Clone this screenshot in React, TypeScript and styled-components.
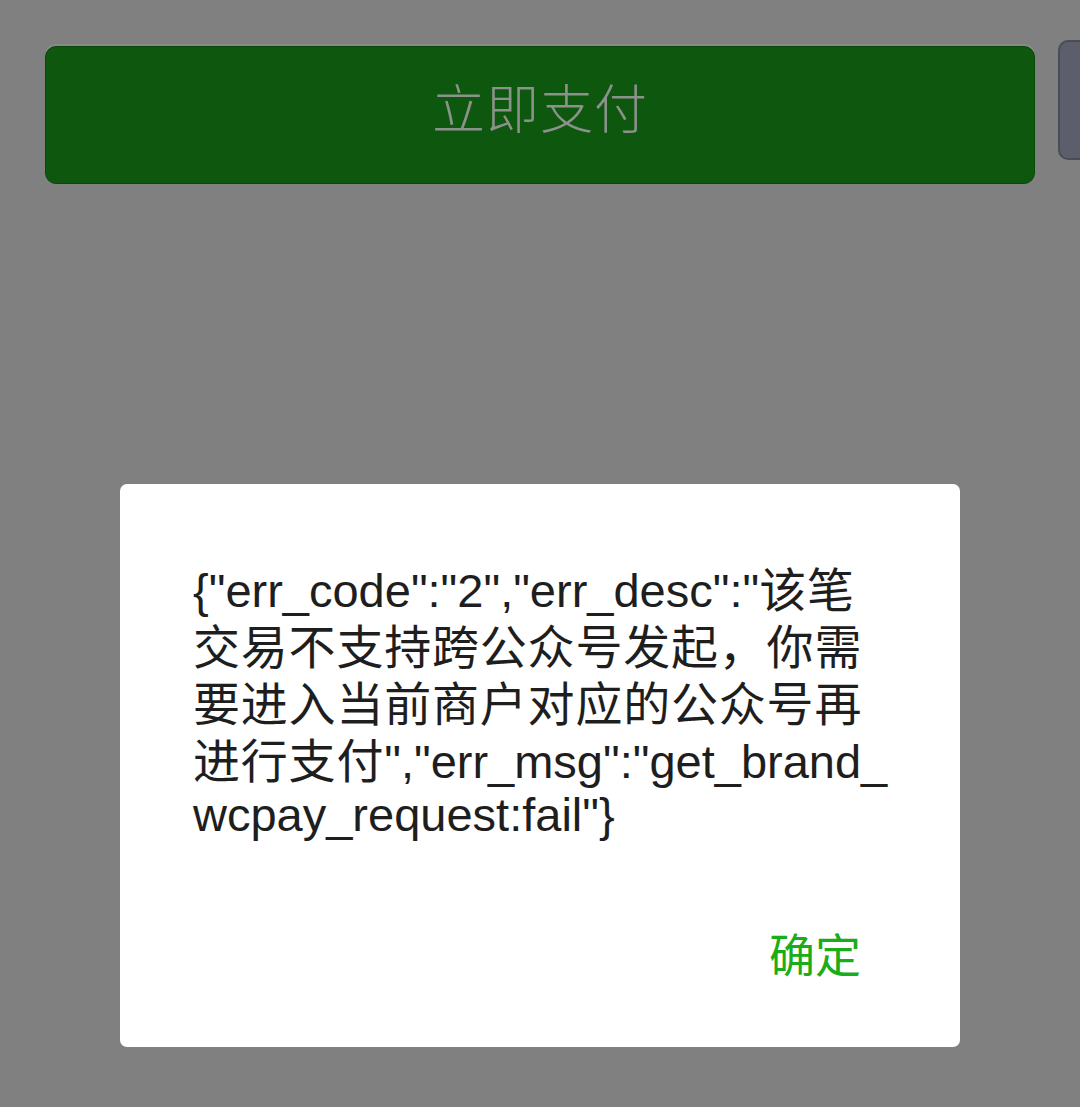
import React from "react";
import styled, { createGlobalStyle } from "styled-components";

const Global = createGlobalStyle`
  html, body { margin: 0; padding: 0; }
  body {
    background: #808080;
    font-family: "Liberation Sans", "Noto Sans CJK SC", sans-serif;
    -webkit-font-smoothing: antialiased;
  }
`;

const Page = styled.div`
  position: relative;
  width: 1080px;
  height: 1107px;
  overflow: hidden;
  background: #808080;
`;

const Header = styled.div`
  display: flex;
  align-items: flex-start;
  gap: 23px;
  padding: 40px 0 0 45px;
`;

const PayButton = styled.button`
  flex: 0 0 990px;
  height: 138px;
  margin-top: 6px;
  box-sizing: border-box;
  border: 1px solid #0a480a;
  border-radius: 11px;
  background: #0e570e;
  box-shadow: 0 -2px 0 rgba(255, 255, 255, 0.08);
  color: #8b928b;
  font-family: "Noto Sans CJK SC", sans-serif;
  font-size: 53px;
  font-weight: 300;
  letter-spacing: 1px;
  line-height: 1;
  padding: 0 0 18px;
  display: flex;
  align-items: center;
  justify-content: center;
`;

const SideTab = styled.div`
  flex: 0 0 60px;
  height: 120px;
  box-sizing: border-box;
  border: 2px solid #4a4d58;
  border-radius: 10px;
  background: #5c5f6b;
`;

const Overlay = styled.div`
  position: absolute;
  inset: 0;
  display: flex;
  justify-content: center;
  align-items: flex-start;
  padding-top: 484px;
`;

const Dialog = styled.div`
  width: 840px;
  height: 563px;
  box-sizing: border-box;
  background: #ffffff;
  border-radius: 7px;
  display: flex;
  flex-direction: column;
`;

const Message = styled.div`
  padding: 74px 0 0 73px;
  color: #1e1e1e;
  font-size: 47px;
`;

const Line = styled.div`
  height: 57px;
  line-height: 57px;
  white-space: nowrap;
  overflow: visible;
`;

const Han = styled.span`
  font-family: "Noto Sans CJK SC", sans-serif;
  letter-spacing: 0.8px;
  line-height: 57px;
`;

const Footer = styled.div`
  display: flex;
  justify-content: flex-end;
  padding: 79px 99px 0 0;
`;

const Confirm = styled.button`
  border: none;
  background: transparent;
  padding: 0;
  height: 60px;
  color: #1aad19;
  font-family: "Noto Sans CJK SC", sans-serif;
  font-size: 46px;
  line-height: 60px;
`;

export default function App() {
  return (
    <>
      <Global />
      <Page>
        <Header>
          <PayButton>立即支付</PayButton>
          <SideTab />
        </Header>
        <Overlay>
          <Dialog>
            <Message>
              <Line>
                {'{"err_code":"2","err_desc":"'}
                <Han>该笔</Han>
              </Line>
              <Line>
                <Han>交易不支持跨公众号发起，你需</Han>
              </Line>
              <Line>
                <Han>要进入当前商户对应的公众号再</Han>
              </Line>
              <Line>
                <Han>进行支付</Han>
                {'","err_msg":"get_brand_'}
              </Line>
              <Line>{'wcpay_request:fail"}'}</Line>
            </Message>
            <Footer>
              <Confirm>确定</Confirm>
            </Footer>
          </Dialog>
        </Overlay>
      </Page>
    </>
  );
}
